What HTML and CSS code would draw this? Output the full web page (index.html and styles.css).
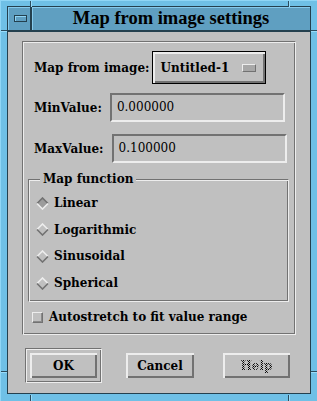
FILE: index.html
```html
<!DOCTYPE html>
<html lang="en">
<head>
    <meta charset="UTF-8">
    <title>Map from image settings</title>
    <link rel="stylesheet" href="styles.css">
</head>
<body>

<div class="window">
    <!-- frame corner notches -->
    <span class="notch notch-v" style="left:29px;top:0"></span>
    <span class="notch notch-v" style="left:287px;top:0"></span>
    <span class="notch notch-v" style="left:29px;bottom:0"></span>
    <span class="notch notch-v" style="left:287px;bottom:0"></span>
    <span class="notch notch-h" style="top:29px;left:0"></span>
    <span class="notch notch-h" style="top:29px;right:0"></span>
    <span class="notch notch-h" style="top:370px;left:0"></span>
    <span class="notch notch-h" style="top:370px;right:0"></span>

    <div class="inner">
        <div class="titlebar">
            <div class="menu-btn"><span class="menu-glyph"></span></div>
            <div class="title">Map from image settings</div>
        </div>

        <div class="dialog">
            <div class="panel etched">
                <div class="row row-image">
                    <span class="label">Map from image:</span>
                    <div class="option">Untitled-1<span class="indicator"></span></div>
                </div>
                <div class="row row-min">
                    <span class="label">MinValue:</span>
                    <div class="field">0.000000</div>
                </div>
                <div class="row row-max">
                    <span class="label">MaxValue:</span>
                    <div class="field">0.100000</div>
                </div>

                <fieldset class="group">
                    <legend>Map function</legend>
                    <div class="radio on">
                        <svg class="diamond" width="13" height="13" viewBox="0 0 13 13">
                            <polygon points="6.5,1 12,6.5 6.5,12 1,6.5" class="fill"/>
                            <polyline points="1,6.5 6.5,1 12,6.5" class="tl"/>
                            <polyline points="1,6.5 6.5,12 12,6.5" class="br"/>
                        </svg>Linear
                    </div>
                    <div class="radio">
                        <svg class="diamond" width="13" height="13" viewBox="0 0 13 13">
                            <polygon points="6.5,1 12,6.5 6.5,12 1,6.5" class="fill"/>
                            <polyline points="1,6.5 6.5,1 12,6.5" class="tl"/>
                            <polyline points="1,6.5 6.5,12 12,6.5" class="br"/>
                        </svg>Logarithmic
                    </div>
                    <div class="radio">
                        <svg class="diamond" width="13" height="13" viewBox="0 0 13 13">
                            <polygon points="6.5,1 12,6.5 6.5,12 1,6.5" class="fill"/>
                            <polyline points="1,6.5 6.5,1 12,6.5" class="tl"/>
                            <polyline points="1,6.5 6.5,12 12,6.5" class="br"/>
                        </svg>Sinusoidal
                    </div>
                    <div class="radio">
                        <svg class="diamond" width="13" height="13" viewBox="0 0 13 13">
                            <polygon points="6.5,1 12,6.5 6.5,12 1,6.5" class="fill"/>
                            <polyline points="1,6.5 6.5,1 12,6.5" class="tl"/>
                            <polyline points="1,6.5 6.5,12 12,6.5" class="br"/>
                        </svg>Spherical
                    </div>
                </fieldset>

                <div class="check"><span class="box"></span>Autostretch to fit value range</div>
            </div>

            <div class="buttons">
                <div class="default etched"><div class="btn">OK</div></div>
                <div class="btn btn-cancel">Cancel</div>
                <div class="btn btn-help"><span class="stipple">Help</span></div>
            </div>
        </div>
    </div>
</div>

</body>
</html>
```

FILE: styles.css
```css
body {
    margin: 0;
    font-family: "DejaVu Serif", serif;
    font-size: 12px;
    font-weight: bold;
    color: #000;
}

.window {
    position: relative;
    width: 317px;
    height: 401px;
    box-sizing: border-box;
    padding: 5px 6px 7px 6px;
    background: #6fc0e6;
    border-top: 1px solid #8fd6f6;
    border-left: 1px solid #8fd6f6;
}

.notch {
    position: absolute;
    background: #2a4c5e;
}

.notch-v {
    width: 1px;
    height: 6px;
    box-shadow: 1px 0 0 #9adcfa;
}

.notch-h {
    width: 6px;
    height: 1px;
    box-shadow: 0 1px 0 #9adcfa;
}

.inner {
    height: 100%;
    box-sizing: border-box;
    border: 1px solid #24404e;
    display: flex;
    flex-direction: column;
}

.titlebar {
    display: flex;
    height: 23px;
    border-bottom: 2px solid #24404e;
    background: #5f9fc1;
}

.menu-btn {
    width: 22px;
    border-right: 2px solid #24404e;
    box-shadow: inset 1px 1px 0 #86cbed;
    display: flex;
    align-items: center;
    justify-content: center;
}

.menu-glyph {
    width: 11px;
    height: 5px;
    border: 1px solid #24404e;
    box-shadow: inset 1px 1px 0 #8fd4f4;
    margin-left: 2px;
}

.title {
    flex: 1;
    text-align: center;
    font-family: "Liberation Serif", serif;
    font-size: 18.5px;
    line-height: 23px;
    box-shadow: inset 1px 1px 0 #86cbed;
}

.dialog {
    flex: 1;
    background: #c0c0c0;
    padding: 9px 14px 0;
}

.etched {
    border: 1px solid;
    border-color: #727272 #ededed #ededed #727272;
    box-shadow: inset 1px 1px 0 #ededed, inset -1px -1px 0 #727272;
}

.panel {
    height: 294px;
    box-sizing: border-box;
    padding: 2px 2px 0 11px;
}

.row {
    display: flex;
    align-items: center;
    gap: 8px;
}

.row-image {
    margin-top: 7px;
    gap: 3px;
}

.row-min {
    margin-top: 9px;
}

.row-max {
    margin-top: 12px;
}

.option {
    width: 114px;
    height: 33px;
    box-sizing: border-box;
    border: 1px solid #000;
    box-shadow: inset 2px 2px 0 #ededed, inset -2px -2px 0 #727272;
    display: flex;
    align-items: center;
    padding-left: 7px;
    gap: 13px;
}

.indicator {
    width: 14px;
    height: 8px;
    box-sizing: border-box;
    border: 1px solid;
    border-color: #ededed #727272 #727272 #ededed;
    background: #a8a8a8;
}

.field {
    width: 175px;
    height: 29px;
    box-sizing: border-box;
    border: 2px solid;
    border-color: #727272 #ededed #ededed #727272;
    padding-left: 5px;
    line-height: 25px;
    font-weight: normal;
}

.group {
    margin: 9px 4px 0 -6px;
    padding: 4px 0 0 7px;
    height: 130px;
    box-sizing: border-box;
    border: 1px solid;
    border-color: #727272 #ededed #ededed #727272;
    box-shadow: inset 1px 1px 0 #ededed, inset -1px -1px 0 #727272;
}

.group legend {
    padding: 0 3px;
    margin-left: 4px;
    line-height: 14px;
    background: #c0c0c0;
}

.radio {
    display: flex;
    align-items: center;
    height: 26.6px;
    gap: 5px;
}

.diamond .fill {
    fill: #c0c0c0;
}

.diamond polyline {
    fill: none;
    stroke-width: 1.6;
}

.diamond .tl {
    stroke: #ededed;
}

.diamond .br {
    stroke: #727272;
}

.radio.on .diamond .fill {
    fill: #9c9c9c;
}

.radio.on .diamond .tl {
    stroke: #727272;
}

.radio.on .diamond .br {
    stroke: #ededed;
}

.check {
    display: flex;
    align-items: center;
    gap: 6px;
    margin: 8px 0 0 -2px;
}

.box {
    width: 11px;
    height: 11px;
    box-sizing: border-box;
    border: 1px solid;
    border-color: #ededed #727272 #727272 #ededed;
    box-shadow: inset -1px -1px 0 #8a8a8a;
}

.buttons {
    display: flex;
    align-items: center;
    margin: 13px 0 0 3px;
}

.default {
    padding: 4px;
}

.btn {
    width: 67px;
    height: 25px;
    box-sizing: border-box;
    box-shadow: inset 2px 2px 0 #ededed, inset -2px -2px 0 #727272;
    display: flex;
    align-items: center;
    justify-content: center;
}

.btn-cancel {
    width: 68px;
    margin-left: 24px;
}

.btn-help {
    margin-left: 29px;
}

.stipple {
    color: transparent;
    background: repeating-conic-gradient(#000 0 25%, transparent 0 50%) 0 0 / 2px 2px;
    -webkit-background-clip: text;
    background-clip: text;
}
```
